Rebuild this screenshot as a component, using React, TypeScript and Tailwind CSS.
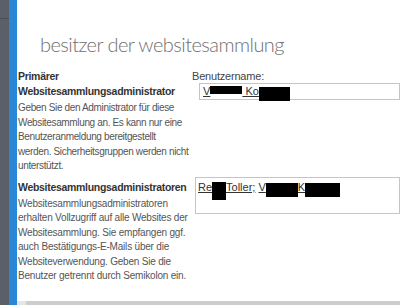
import React from 'react';

const Redact: React.FC<{ w: number; h?: number; down?: number }> = ({ w, h = 14, down = 0 }) => (
  <span
    className="inline-block bg-black align-top"
    style={{ width: w, height: h, marginTop: down }}
  />
);

const App: React.FC = () => {
  return (
    <div className="flex w-[400px] h-[305px] overflow-hidden bg-white font-['Liberation_Sans',sans-serif]">
      {/* side rails */}
      <div className="w-[9px] h-full bg-[#5b6068] flex flex-col">
        <div className="h-[19px] border-b border-[#4a4e55]" />
      </div>
      <div className="w-[8px] h-full bg-[#2a86d6]" />

      <div className="flex-1 flex flex-col">
        <div className="flex-1">
          <h1 className="ml-[23px] mt-[31px] text-[20px] leading-[26px] font-light text-[#707070] font-['Lato',sans-serif] tracking-[-0.55px]">
            besitzer der websitesammlung
          </h1>

          {/* primary admin */}
          <div className="flex mt-[12px]">
            <div className="w-[175px] pl-[1px]">
              <div className="text-[10.5px] leading-[15px] font-bold text-[#333] tracking-[-0.3px]">
                Primärer
                <br />
                Websitesammlungsadministrator
              </div>
              <p className="mt-[2px] text-[10px] leading-[14.5px] text-[#555] tracking-[-0.35px]">
                Geben Sie den Administrator für diese Websitesammlung an. Es kann nur eine Benutzeranmeldung bereitgestellt
                <br />
                werden. Sicherheitsgruppen werden nicht unterstützt.
              </p>
            </div>
            <div className="flex-1">
              <div className="text-[11px] leading-[15px] text-[#444] tracking-[-0.2px]">Benutzername:</div>
              <div className="ml-[7px] mt-[-1px] h-[17px] border border-[#b9c8d9] pl-[3px] text-[11px] leading-[15px] text-[#333] whitespace-nowrap">
                <span className="underline">V</span>
                <Redact w={32} h={8} down={2} />
                <span className="underline">&nbsp;Ko</span>
                <Redact w={31} h={14} down={3} />
              </div>
            </div>
          </div>

          {/* site collection admins */}
          <div className="flex mt-[3px]">
            <div className="w-[175px] pl-[1px]">
              <div className="mt-[3px] text-[10.5px] leading-[15px] font-bold text-[#333] tracking-[-0.3px]">
                Websitesammlungsadministratoren
              </div>
              <p className="mt-[2px] text-[10px] leading-[14.5px] text-[#555] tracking-[-0.2px]">
                Websitesammlungsadministratoren erhalten Vollzugriff auf alle Websites der Websitesammlung. Sie empfangen ggf. auch Bestätigungs-E-Mails über die Websiteverwendung. Geben Sie die Benutzer getrennt durch Semikolon ein.
              </p>
            </div>
            <div className="flex-1">
              <div className="ml-[3px] h-[37px] border border-[#b9c8d9] pl-[2px] pt-[2px] text-[11px] leading-[15px] text-[#333] whitespace-nowrap">
                <span className="underline">Re</span>
                <Redact w={14} h={18} down={2} />
                <span className="underline">Toller;</span> <span className="underline">V</span>
                <Redact w={32} h={14} down={3} />
                <span className="underline">K</span>
                <Redact w={35} h={14} down={3} />
              </div>
            </div>
          </div>
        </div>

        {/* scrollbar */}
        <div className="flex h-[4px]">
          <div className="w-[9px] bg-[#e6e6e6]" />
          <div className="flex-1 bg-[#cdcdcd]" />
        </div>
      </div>
    </div>
  );
};

export default App;
